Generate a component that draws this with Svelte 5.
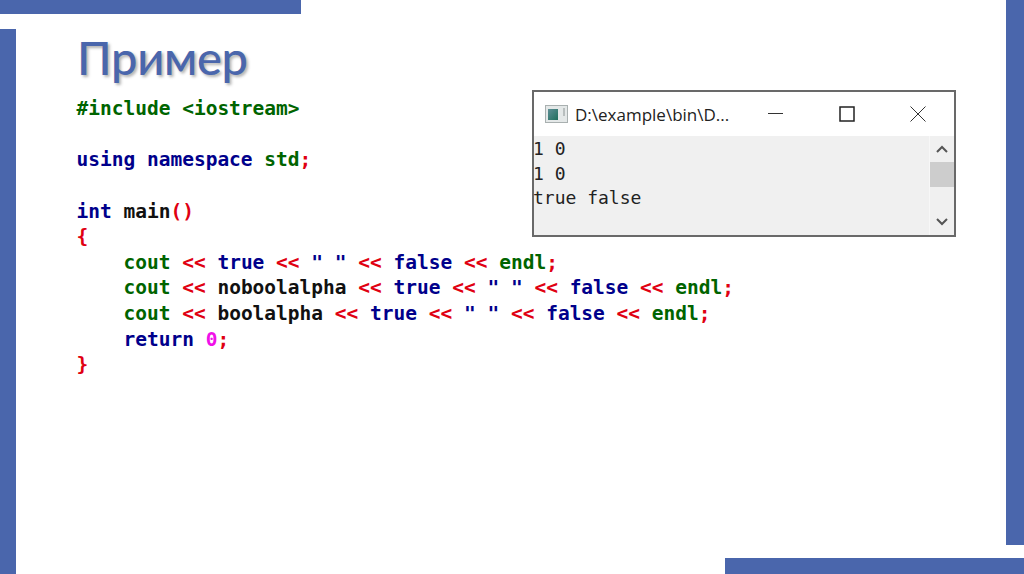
<script lang="ts">
  // Slide: C++ boolalpha example with console output
  type Tok = [string, string];

  const code: Tok[][] = [
    [['pre', '#include <iostream>']],
    [],
    [['kw', 'using namespace '], ['id', 'std'], ['op', ';']],
    [],
    [['kw', 'int '], ['plain', 'main'], ['op', '()']],
    [['op', '{']],
    [['id', '    cout '], ['op', '<<'], ['kw', ' true '], ['op', '<<'], ['kw', ' " " '], ['op', '<<'], ['kw', ' false '], ['op', '<<'], ['id', ' endl'], ['op', ';']],
    [['id', '    cout '], ['op', '<<'], ['plain', ' noboolalpha '], ['op', '<<'], ['kw', ' true '], ['op', '<<'], ['kw', ' " " '], ['op', '<<'], ['kw', ' false '], ['op', '<<'], ['id', ' endl'], ['op', ';']],
    [['id', '    cout '], ['op', '<<'], ['plain', ' boolalpha '], ['op', '<<'], ['kw', ' true '], ['op', '<<'], ['kw', ' " " '], ['op', '<<'], ['kw', ' false '], ['op', '<<'], ['id', ' endl'], ['op', ';']],
    [['kw', '    return '], ['num', '0'], ['op', ';']],
    [['op', '}']]
  ];

  const output = ['1 0', '1 0', 'true false'];
</script>

<div class="slide">
  <div class="bar-top"></div>
  <div class="bar-left"></div>
  <div class="bar-right"></div>
  <div class="bar-bottom"></div>

  <main class="content">
    <h1>Пример</h1>
    <div class="body">
      <pre class="code">{#each code as line}<div class="line">{#each line as [cls, text]}<span class={cls}>{text}</span>{/each}</div>{/each}</pre>

      <section class="console">
        <header class="titlebar">
          <svg class="app-icon" width="23" height="18" viewBox="0 0 23 18">
            <rect x="0.5" y="0.5" width="22" height="17" fill="#e4e8e8" stroke="#a9b0b0" />
            <defs>
              <linearGradient id="ico" x1="0" y1="0" x2="1" y2="1">
                <stop offset="0" stop-color="#5f8f96" />
                <stop offset="1" stop-color="#1f6f5c" />
              </linearGradient>
            </defs>
            <rect x="3" y="4" width="10" height="11" fill="url(#ico)" />
            <rect x="18" y="3" width="2" height="8" fill="#b8bebe" />
          </svg>
          <span class="name">D:\example\bin\D...</span>
          <div class="controls">
            <svg width="16" height="16" viewBox="0 0 16 16"><path d="M0 7.5h15" stroke="#333" fill="none" /></svg>
            <svg width="16" height="16" viewBox="0 0 16 16"><rect x="1" y="1" width="14" height="14" stroke="#222" stroke-width="1.5" fill="none" /></svg>
            <svg width="16" height="16" viewBox="0 0 16 16"><path d="M0.5 0.5l15 15M15.5 0.5l-15 15" stroke="#333" fill="none" /></svg>
          </div>
        </header>
        <div class="screen">
          <pre class="out">{#each output as row}<div>{row}</div>{/each}</pre>
          <div class="scroll">
            <svg class="arrow" width="12" height="8" viewBox="0 0 12 8"><path d="M1 7l5-5 5 5" stroke="#555" stroke-width="2" fill="none" /></svg>
            <div class="thumb"></div>
            <svg class="arrow down" width="12" height="8" viewBox="0 0 12 8"><path d="M1 1l5 5 5-5" stroke="#555" stroke-width="2" fill="none" /></svg>
          </div>
        </div>
      </section>
    </div>
  </main>
</div>

<style>
  :global(body) {
    margin: 0;
    background: #fff;
  }

  .slide {
    width: 1024px;
    height: 574px;
    overflow: hidden;
    display: grid;
    grid-template-columns: 16px 285px 424px 1fr 18px;
    grid-template-rows: 14px 1fr 16px;
    background: #fff;
  }

  /* Decorative bars */
  .bar-top {
    grid-column: 1 / 3;
    grid-row: 1;
    background: #4a66ac;
  }

  .bar-left {
    grid-column: 1;
    grid-row: 2 / 4;
    margin-top: 15px;
    background: #4a66ac;
  }

  .bar-right {
    grid-column: 5;
    grid-row: 1 / 3;
    margin-bottom: 13px;
    background: #4a66ac;
  }

  .bar-bottom {
    grid-column: 4 / 6;
    grid-row: 3;
    background: #4a66ac;
  }

  .content {
    grid-column: 2 / 5;
    grid-row: 2;
    padding-left: 61px;
    min-width: 0;
  }

  h1 {
    margin: 13px 0 0 0;
    height: 61px;
    font-family: Lato, "Open Sans", sans-serif;
    font-size: 47px;
    line-height: 60px;
    font-weight: 500;
    letter-spacing: -0.3px;
    color: #4a66ac;
    text-shadow: 2px 2px 3px rgba(60, 60, 60, 0.4);
  }

  .body {
    display: flex;
    align-items: flex-start;
  }

  .code {
    margin: 8px 0 0 -0.5px;
    width: 455.5px;
    font-family: "DejaVu Sans Mono", monospace;
    font-size: 19.5px;
    font-weight: 700;
    line-height: 25.65px;
  }

  .line {
    height: 25.65px;
    white-space: pre;
  }

  .pre { color: #006400; }
  .kw { color: #00008b; }
  .id { color: #006400; }
  .op { color: #e00012; }
  .plain { color: #111; }
  .num { color: #f010e8; }

  /* Console window */
  .console {
    flex: none;
    width: 424px;
    height: 147px;
    margin-top: 2px;
    box-sizing: border-box;
    border: 2px solid #696969;
    background: #fff;
    display: flex;
    flex-direction: column;
  }

  .titlebar {
    height: 44px;
    flex: none;
    display: flex;
    align-items: center;
    padding-left: 11px;
  }

  .app-icon {
    margin-right: 7px;
    flex: none;
  }

  .name {
    font-family: "Open Sans", sans-serif;
    font-size: 17px;
    color: #222;
    white-space: nowrap;
  }

  .controls {
    margin-left: auto;
    margin-right: 28px;
    display: flex;
    gap: 55px;
  }

  .screen {
    flex: 1;
    display: flex;
    background: #f0f0f0;
    min-height: 0;
  }

  .out {
    flex: 1;
    margin: 0 0 0 -1px;
    padding: 1px 0 0;
    font-family: "DejaVu Sans Mono", monospace;
    font-size: 18px;
    line-height: 24.5px;
    color: #222;
  }

  .scroll {
    width: 24px;
    flex: none;
    display: flex;
    flex-direction: column;
    align-items: center;
    border-left: 1px solid #f7f7f7;
  }

  .arrow {
    margin-top: 9px;
    flex: none;
  }

  .thumb {
    width: 100%;
    height: 25px;
    margin-top: 9px;
    background: #cdcdcd;
  }

  .down {
    margin-top: auto;
    margin-bottom: 9px;
  }
</style>
